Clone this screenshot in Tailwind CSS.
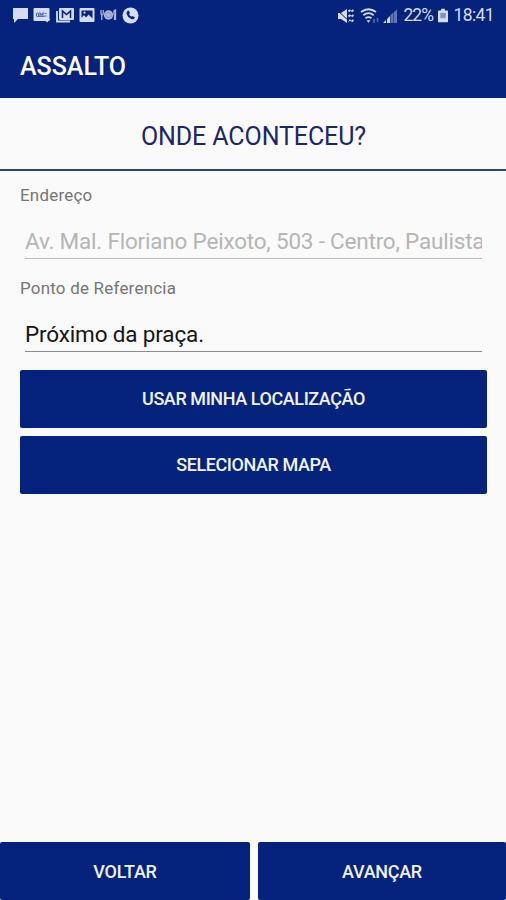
<!DOCTYPE html>
<html lang="pt-BR">
<head>
  <meta charset="UTF-8" />
  <meta name="viewport" content="width=device-width, initial-scale=1.0" />
  <title>Assalto</title>
  <script src="https://cdn.jsdelivr.net/npm/@tailwindcss/browser@4"></script>
</head>
<body class="h-screen overflow-hidden bg-[#fafafa] font-['Roboto',sans-serif]">
  <div class="flex h-full flex-col">

    <header class="h-[98px] shrink-0 bg-[#05227d] text-white">
      <!-- status bar -->
      <div class="flex h-8 items-center justify-between pl-3 pr-[13px] text-[#d5dcf5]">
        <div class="flex items-center gap-[5px] pb-[2px]">
          <svg class="h-4 w-4" viewBox="0 0 16 16" fill="currentColor"><path d="M1 1h15v11H6l-4 4v-4H1z"/></svg>
          <svg class="h-4 w-[18px]" viewBox="0 0 17 16">
            <rect x="0" y="1" width="16" height="13" rx="1" fill="currentColor"/>
            <path d="M3 9V7q0-1 1-1t1 1v2M6.500 9V6l1.500 2 1.500-2v3M11 6.500h2M11 9h2M3 9.500h8" fill="none" stroke="#05227d" stroke-opacity=".6" stroke-width="1.100"/>
            <path d="M12 10h3v2h2l-3.500 3.500L10.500 12H12z" fill="currentColor"/>
          </svg>
          <svg class="h-4 w-[18px]" viewBox="0 0 18 16">
            <path d="M1 4v10.500h13" fill="none" stroke="currentColor" stroke-width="1.800"/>
            <rect x="3" y="1" width="15" height="12" rx="1" fill="currentColor"/>
            <path d="M6.500 11V4l4 3.500 4-3.500v7" fill="none" stroke="#05227d" stroke-width="1.500"/>
          </svg>
          <svg class="h-4 w-4" viewBox="0 0 16 16">
            <rect x="0.500" y="1" width="15" height="14" rx="1" fill="currentColor"/>
            <path d="M2.500 3.500h11v8l-4-4-2.500 3L5 8l-2.500 3z" fill="#05227d"/>
            <circle cx="5.500" cy="5.700" r="1.100" fill="currentColor"/>
          </svg>
          <svg class="h-4 w-[17px] opacity-80" viewBox="0 0 17 16" fill="currentColor">
            <circle cx="8.500" cy="8" r="4.700"/>
            <path d="M1 3v3.500q0 1.200.8 1.500V13M3.200 3v3.500q0 1.200-1 1.500M14.500 13V8q-1.200-1-.2-4.500l1.200-.5v10" fill="none" stroke="currentColor" stroke-width="1.300"/>
            <circle cx="8.500" cy="8" r="2.600" fill="none" stroke="#05227d" stroke-opacity=".25" stroke-width=".8"/>
          </svg>
          <svg class="h-[17px] w-[17px]" viewBox="0 0 17 17">
            <circle cx="8.500" cy="8.500" r="8" fill="currentColor"/>
            <path d="M5.300 4.200l1.400-.6 1.300 2.300-1 1.100q.8 1.900 2.500 2.800l1.100-.9 2.200 1.300-.6 1.600q-1.200.9-3 .1-3.600-1.600-4.600-5-.3-1.600.7-2.700z" fill="#05227d"/>
          </svg>
        </div>
        <div class="flex items-center">
          <svg class="h-4 w-[17px]" viewBox="0 0 17 16" fill="currentColor">
            <path d="M1 5h3l6-4v14l-6-4H1z"/>
            <path d="M11.500 3.500l2-1.500M14.500 3.500L16.500 2M11.500 8.500l2-1.500M14.500 8.500L16.500 7M11.500 13.500l2-1.500M14.500 13.500l2-1.500" stroke="currentColor" stroke-width="2"/>
            <path d="M0 2l13 12" stroke="#05227d" stroke-width="1"/>
          </svg>
          <svg class="ml-[6px] h-4 w-5" viewBox="0 0 20 16" fill="none" stroke="currentColor" stroke-width="1.800">
            <path d="M1 4q7.500-5.500 15 0M3.300 7.200q5.200-4 10.400 0M5.500 10.300q3-2.200 6 0"/>
            <path d="M6.500 12.200h4l-2 2.500z" fill="currentColor" stroke="none"/>
            <path d="M14 11v4M17.500 10v4" stroke-opacity=".35"/>
          </svg>
          <svg class="ml-[2px] h-4 w-4" viewBox="0 0 16 16" fill="currentColor">
            <path d="M1 15l3-3v3zM5 15v-4l3-3v7z"/>
            <path d="M8.500 15V7L11.500 4.500V15zM12 15V4L15 1.500V15z" opacity=".45"/>
          </svg>
          <span class="ml-[5px] w-[29px] whitespace-nowrap text-[17.500px] leading-none tracking-[-0.9px]">22%</span>
          <svg class="ml-[6px] h-4 w-[10px]" viewBox="0 0 11 16" fill="currentColor">
            <path d="M3.500 0h4v2H10q1 0 1 1v11q0 1-1 1H1q-1 0-1-1V3q0-1 1-1h2.500z"/>
            <path d="M2.500 4.500h6v6h-6z" fill="#05227d" opacity=".4"/>
          </svg>
          <span class="-mr-px ml-[5px] whitespace-nowrap text-[17.500px] leading-none tracking-[-0.6px]">18:41</span>
        </div>
      </div>
      <h1 class="px-5 pt-[17px] text-[25px] font-medium leading-9">ASSALTO</h1>
    </header>

    <h2 class="flex h-[73px] shrink-0 items-center justify-center border-b-2 border-[#30427f] pl-px pt-[6px] text-[25px] tracking-[-0.1px] text-[#1b2768]">ONDE ACONTECEU?</h2>

    <main class="flex grow flex-col px-5">
      <label for="endereco" class="mt-[14px] text-[16.900px] leading-5 tracking-[0.25px] text-[#757575]">Endereço</label>
      <input id="endereco" type="text" placeholder="Av. Mal. Floriano Peixoto, 503 - Centro, Paulista - PE" class="ml-[5px] mr-1 mt-5 h-[34px] border-b border-[#bdbdbd] pb-px text-[22.500px] tracking-[-0.2px] placeholder-[#b5b5b5] outline-none" />
      <label for="referencia" class="mt-[19px] text-[16.900px] leading-5 tracking-[0.25px] text-[#757575]">Ponto de Referencia</label>
      <input id="referencia" type="text" value="Próximo da praça." class="ml-[5px] mr-1 mt-5 h-[34px] border-b border-[#8c8c8c] pb-px text-[22.500px] tracking-[-0.15px] text-[#151515] outline-none" />
      <button type="button" class="-mr-px mt-[17.500px] h-[58px] rounded-[2px] bg-[#05227d] text-[18px] font-medium tracking-[-0.42px] text-[#f0f3ff]">USAR MINHA LOCALIZAÇÃO</button>
      <button type="button" class="-mr-px mt-2 h-[58px] rounded-[2px] bg-[#05227d] text-[18px] font-medium tracking-[-0.42px] text-[#f0f3ff]">SELECIONAR MAPA</button>
    </main>

    <footer class="grid h-[58px] shrink-0 grid-cols-[250px_1fr] gap-2">
      <button type="button" class="rounded-[2px] bg-[#05227d] text-[18px] font-medium tracking-[-0.25px] text-[#f0f3ff]">VOLTAR</button>
      <button type="button" class="rounded-[2px] bg-[#05227d] text-[18px] font-medium tracking-[-0.3px] text-[#f0f3ff]">AVANÇAR</button>
    </footer>

  </div>
</body>
</html>
